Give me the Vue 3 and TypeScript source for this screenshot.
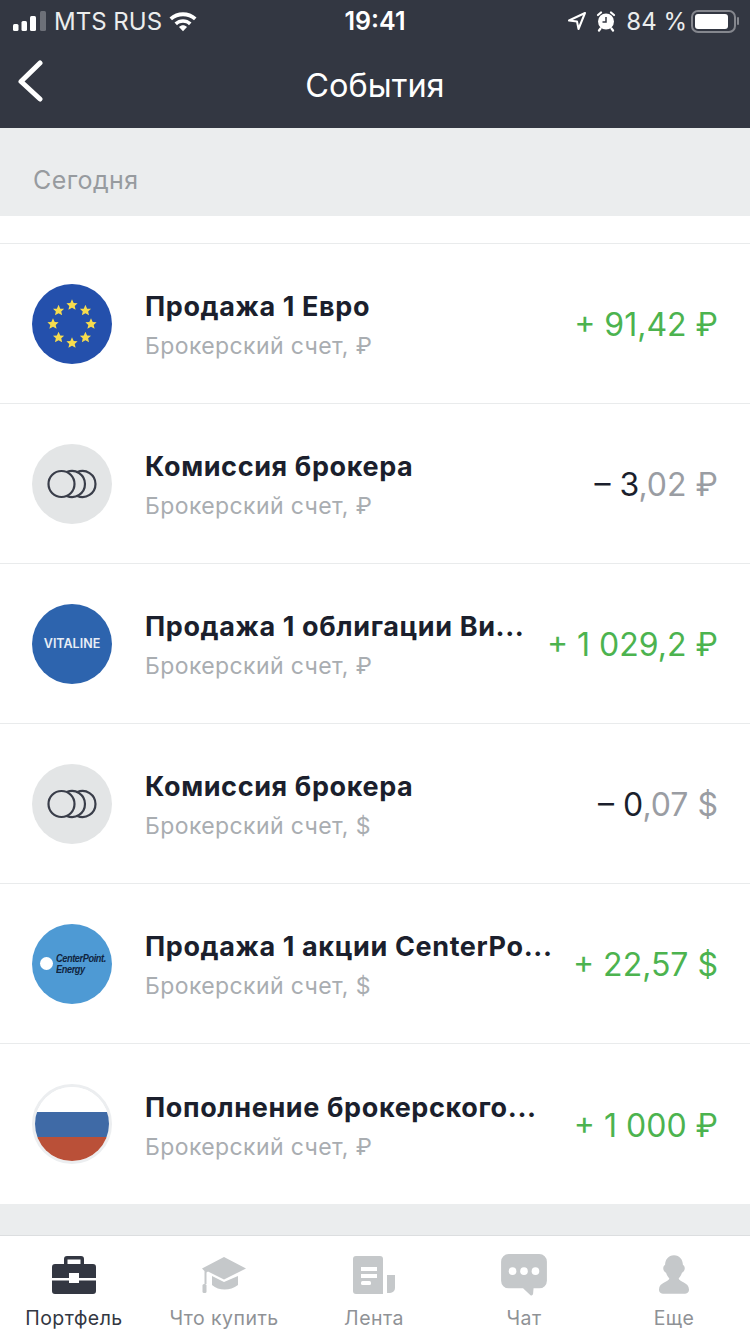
<script setup lang="ts">
interface Row { key: number; kind: string; title: string; sub: string; sign: string; whole: string; frac: string; cur: string; plus: boolean }
const rows: Row[] = [
  { key: 1, kind: 'eu', title: 'Продажа 1 Евро', sub: 'Брокерский счет, ₽', sign: '+', whole: '91', frac: ',42', cur: '₽', plus: true },
  { key: 2, kind: 'fee', title: 'Комиссия брокера', sub: 'Брокерский счет, ₽', sign: '–', whole: '3', frac: ',02', cur: '₽', plus: false },
  { key: 3, kind: 'vit', title: 'Продажа 1 облигации Ви...', sub: 'Брокерский счет, ₽', sign: '+', whole: '1 029', frac: ',2', cur: '₽', plus: true },
  { key: 4, kind: 'fee', title: 'Комиссия брокера', sub: 'Брокерский счет, $', sign: '–', whole: '0', frac: ',07', cur: '$', plus: false },
  { key: 5, kind: 'cnp', title: 'Продажа 1 акции CenterPo...', sub: 'Брокерский счет, $', sign: '+', whole: '22', frac: ',57', cur: '$', plus: true },
  { key: 6, kind: 'ru', title: 'Пополнение брокерского...', sub: 'Брокерский счет, ₽', sign: '+', whole: '1 000', frac: '', cur: '₽', plus: true },
]
const stars = Array.from({ length: 8 }, (_, i) => {
  const a = (i * 45 - 90) * Math.PI / 180
  return { x: 40 + 19 * Math.cos(a), y: 40 + 19 * Math.sin(a) }
})
</script>

<template>
  <div class="page">
    <header class="top">
      <div class="status">
        <div class="st-left">
          <svg width="36" height="22" viewBox="0 0 36 22"><rect x="1" y="14" width="5.500" height="7" rx="1.500" fill="#fff"/><rect x="9.500" y="11" width="5.500" height="10" rx="1.500" fill="#fff"/><rect x="18" y="6" width="6" height="15" rx="1.500" fill="#fff"/><rect x="28" y="1" width="6" height="20" rx="1.500" fill="#6d7078"/></svg>
          <span class="carrier">MTS RUS</span>
          <svg width="30" height="22" viewBox="0 0 30 22"><path d="M1.500 7.500C9 .5 21 .5 28.500 7.500L26 10.200C20 4.800 10 4.800 4 10.200Z" fill="#fff"/><path d="M6.500 12.500C11.500 8 18.500 8 23.500 12.500L21 15.200C17.500 12 12.500 12 9 15.200Z" fill="#fff"/><path d="M11 17C13.500 14.800 16.500 14.800 19 17L15 21.300Z" fill="#fff"/></svg>
        </div>
        <span class="clock">19:41</span>
        <div class="st-right">
          <svg class="arrow" width="20" height="20" viewBox="0 0 20 20"><path d="M18 2 2 9.500 10 10.500 11.500 18Z" fill="none" stroke="#fff" stroke-width="2" stroke-linejoin="round"/></svg>
          <svg class="alarm" width="22" height="22" viewBox="0 0 22 22"><circle cx="11" cy="11.500" r="8" fill="#fff"/><path d="M3 5 6 2.500M19 5 16 2.500M5.500 18.500 4 20.500M16.500 18.500 18 20.500" stroke="#fff" stroke-width="2.200" stroke-linecap="round"/><path d="M11 7V12H7.500" stroke="#333742" stroke-width="1.500" fill="none"/></svg>
          <span class="pct">84 %</span>
          <div class="batt"><div class="batt-fill"></div></div>
          <div class="batt-cap"></div>
        </div>
      </div>
      <div class="nav">
        <svg class="back" width="28" height="42" viewBox="0 0 28 42"><path d="M23 3 4 21.500 23 39" fill="none" stroke="#fff" stroke-width="5" stroke-linecap="round" stroke-linejoin="round"/></svg>
        <span class="nav-title">События</span>
      </div>
    </header>

    <div class="section">Сегодня</div>

    <main class="list">
      <div v-for="r in rows" :key="r.key" class="row">
        <div class="avatar" :class="'av-' + r.kind">
          <svg v-if="r.kind === 'eu'" width="80" height="80" viewBox="0 0 80 80">
            <polygon v-for="(s, i) in stars" :key="i" :transform="`translate(${s.x} ${s.y})`" points="0,-5.800 1.700,-1.900 5.600,-1.800 2.700,.9 3.600,4.800 0,2.700 -3.600,4.800 -2.700,.9 -5.600,-1.800 -1.700,-1.900" fill="#f6dc4e"/>
          </svg>
          <svg v-else-if="r.kind === 'fee'" width="80" height="80" viewBox="0 0 80 80">
            <g fill="none" stroke="#3a3e4a" stroke-width="2.200">
              <path d="M34.750 28.100A13 13 0 1 1 34.750 51.900" />
              <path d="M45.250 28.100A13 13 0 1 1 45.250 51.900" />
              <circle cx="29.500" cy="40" r="13"/>
            </g>
          </svg>
          <span v-else-if="r.kind === 'vit'" class="vit">VITALINE</span>
          <div v-else-if="r.kind === 'cnp'" class="cnp">
            <span class="cnp-dot"></span>
            <span class="cnp-text">CenterPoint.<br>Energy</span>
          </div>
          <div v-else class="flag">
            <div class="f-w"></div><div class="f-b"></div><div class="f-r"></div>
          </div>
        </div>
        <div class="info">
          <div class="title">{{ r.title }}</div>
          <div class="sub">{{ r.sub }}</div>
        </div>
        <div class="amount" :class="{ plus: r.plus }">
          <span class="whole">{{ r.sign }} {{ r.whole }}</span><span class="frac">{{ r.frac }} {{ r.cur }}</span>
        </div>
      </div>
    </main>

    <div class="spacer"></div>

    <nav class="tabs">
      <div class="tab active">
        <svg width="44" height="38" viewBox="0 0 44 38"><path d="M12 8V3a3 3 0 0 1 3-3h14a3 3 0 0 1 3 3v5h-3.500V3.500h-13V8Z" fill="#333742"/><path d="M3 8h38a3 3 0 0 1 3 3v11H27v-5H17v5H0V11a3 3 0 0 1 3-3ZM0 24.500h17V27h10v-2.500h17V35a3 3 0 0 1-3 3H3a3 3 0 0 1-3-3Z" fill="#333742"/></svg>
        <span>Портфель</span>
      </div>
      <div class="tab">
        <svg width="44" height="38" viewBox="0 0 44 38"><path d="M22 1 44 12.500 22 23.500 6 15.500 4.500 16.500V28H2.500V15L0 12.500Z" fill="#c5c8ca"/><rect x="0.500" y="28" width="4" height="9" rx="1.500" fill="#c5c8ca"/><path d="M10 20 22 26 36 20V29C28 35 17 35 10 29Z" fill="#c5c8ca"/></svg>
        <span>Что купить</span>
      </div>
      <div class="tab">
        <svg width="42" height="38" viewBox="0 0 42 38"><path d="M3 0h24a3 3 0 0 1 3 3v35H3a3 3 0 0 1-3-3V3a3 3 0 0 1 3-3Z" fill="#c5c8ca"/><rect x="8" y="11" width="16" height="4" fill="#fff"/><rect x="8" y="18" width="16" height="4" fill="#fff"/><rect x="8" y="25" width="10" height="4" rx="1.500" fill="#fff"/><path d="M34 19h8v13a5 5 0 0 1-5 5h-3a5 5 0 0 0 0-2Z" fill="#c5c8ca"/></svg>
        <span>Лента</span>
      </div>
      <div class="tab">
        <svg width="48" height="44" viewBox="0 0 48 44"><path d="M8 0h32a8 8 0 0 1 8 8v20a8 8 0 0 1-8 8h-6l-.5 6a2 2 0 0 1-3 1L23 36H8a8 8 0 0 1-8-8V8a8 8 0 0 1 8-8Z" fill="#c5c8ca"/><circle cx="12" cy="18" r="4" fill="#fff"/><circle cx="24" cy="18" r="4" fill="#fff"/><circle cx="36" cy="18" r="4" fill="#fff"/></svg>
        <span>Чат</span>
      </div>
      <div class="tab">
        <svg width="30" height="40" viewBox="0 0 32 42"><path d="M16 0C22 0 25.500 5 25.500 10c3 2 2.500 7-1 8.500-1 3-2.500 5-3.500 6 0 4 11 4 11 12 0 2.500-1 4.500-6 4.500H6c-5 0-6-2-6-4.500 0-8 11-8 11-12-1-1-2.500-3-3.500-6-3.500-1.500-4-6.500-1-8.500C6.500 5 10 0 16 0Z" fill="#c5c8ca"/></svg>
        <span>Еще</span>
      </div>
    </nav>
  </div>
</template>

<style>
html, body { margin: 0; background: #fff; }
</style>

<style scoped>
.page {
  width: 750px;
  height: 1334px;
  overflow: hidden;
  display: flex;
  flex-direction: column;
  background: #fff;
  font-family: Inter, "Noto Sans", sans-serif;
}
.top { height: 128px; background: #333742; color: #fff; flex: none; }
.status { height: 42px; padding: 0 11px 0 12px; display: flex; align-items: center; position: relative; }
.st-left { display: flex; align-items: center; gap: 6px; }
.carrier { font-size: 24px; color: #eceded; }
.clock { position: absolute; left: 0; right: 0; text-align: center; font-size: 25px; font-weight: 600; }
.st-right { margin-left: auto; display: flex; align-items: center; position: relative; }
.alarm { margin-left: 8px; }
.pct { font-size: 24px; color: #eceded; margin-left: 9px; white-space: nowrap; }
.batt { width: 45px; height: 23px; box-sizing: border-box; border: 2px solid #85878e; border-radius: 7px; padding: 2px; margin-left: 4px; }
.batt-fill { width: 33px; height: 100%; background: #fff; border-radius: 3px; }
.batt-cap { width: 2px; height: 8px; background: #85878e; border-radius: 1px; margin-left: 1px; }
.nav { height: 86px; position: relative; display: flex; align-items: center; justify-content: center; }
.back { position: absolute; left: 17px; top: 18px; }
.nav-title { font-size: 32.500px; }
.section { height: 88px; box-sizing: border-box; background: #ebedee; color: #979b9f; font-size: 25px; padding: 38px 0 0 33px; flex: none; letter-spacing: .4px; line-height: 29px; }
.list { margin-top: 27px; border-top: 1px solid #e9ebec; flex: none; }
.row { height: 160px; box-sizing: border-box; border-bottom: 1px solid #e9ebec; display: flex; align-items: center; padding: 0 32px; }
.row:last-child { border-bottom: none; }
.avatar { width: 80px; height: 80px; border-radius: 50%; overflow: hidden; flex: none; display: flex; align-items: center; justify-content: center; }
.av-eu { background: #2450ac; }
.av-fee { background: #e3e5e6; }
.av-vit { background: #2d64ae; }
.av-cnp { background: #4e9ad4; }
.av-ru { background: #fff; box-sizing: border-box; border: 3px solid #eceef0; }
.vit { color: #e8eef6; font-size: 12.500px; font-weight: 600; }
.cnp { display: flex; align-items: center; width: 100%; padding-left: 8px; box-sizing: border-box; }
.cnp-dot { width: 13px; height: 13px; border-radius: 50%; background: #fff; flex: none; }
.cnp-text { font-family: "Liberation Sans", sans-serif; font-size: 11.500px; line-height: 11px; font-weight: 700; font-style: italic; color: #10253f; letter-spacing: -.5px; margin-left: 3px; transform: scaleX(.8); transform-origin: left center; white-space: nowrap; }
.flag { width: 100%; height: 100%; display: flex; flex-direction: column; }
.f-w { height: 25px; background: #fff; }
.f-b { height: 25px; background: #3f6aa6; }
.f-r { flex: 1; background: #ba5038; }
.info { margin-left: 33px; min-width: 0; flex: 1; padding-top: 4px; }
.title { font-size: 27px; font-weight: 700; color: #1b1f2d; line-height: 34px; white-space: nowrap; letter-spacing: .62px; }
.sub { font-size: 23px; color: #a9adb1; line-height: 30px; margin-top: 7px; letter-spacing: .4px; white-space: nowrap; }
.amount { font-size: 32px; color: #1b1f2d; white-space: nowrap; flex: none; padding-top: 2px; }
.amount .frac { color: #9a9da3; }
.amount.plus, .amount.plus .frac { color: #4cb34f; }
.spacer { flex: 1; background: #ebedee; }
.tabs { height: 98px; border-top: 1px solid #dcdee0; display: flex; flex: none; background: #fff; }
.tab { width: 150px; display: flex; flex-direction: column; align-items: center; padding-top: 18px; box-sizing: border-box; color: #8f9296; font-size: 19.500px; letter-spacing: .45px; position: relative; left: -1px; }
.tab svg { height: 42px; flex: none; }
.tab span { margin-top: 10px; line-height: 24px; }
.tab.active { color: #333742; }
</style>
